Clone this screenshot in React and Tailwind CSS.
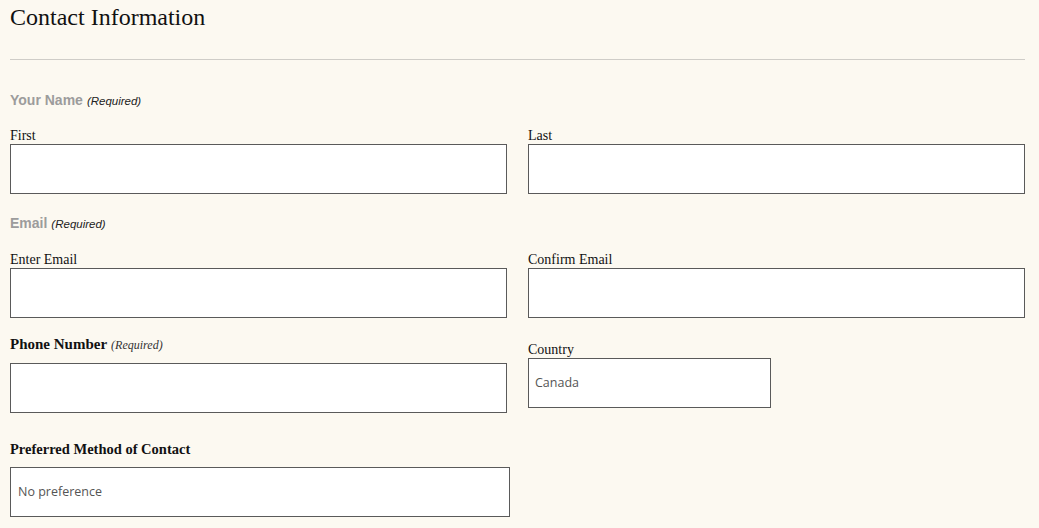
export default function App() {
  const serif = "font-['Liberation_Serif','EB_Garamond',serif]";
  const sans = "font-['Liberation_Sans',Arial,sans-serif]";
  const inputCls = "block w-full h-[50px] border border-[#5a5a5a] bg-white";
  const labelCls = "block h-[18px] text-[14px] leading-[20px]";

  return (
    <div className={`min-h-[528px] bg-[#fcf9f1] pl-[10px] pr-[14px] text-[#111] ${serif}`}>
      <h2 className="text-[24px] leading-[34px] font-normal">Contact Information</h2>
      <hr className="mt-[25px] border-0 border-t border-[#cfcdc8]" />

      <div className="mt-[30px] h-[20px] leading-[20px]">
        <span className={`text-[14px] font-bold text-[#9c9c9c] ${sans}`}>Your Name</span>{" "}
        <span className={`text-[11.5px] italic text-[#222] ${sans}`}>(Required)</span>
      </div>
      <div className="mt-[16px] grid grid-cols-2 gap-x-[21px]">
        <div>
          <label className={labelCls}>First</label>
          <div className={inputCls}></div>
        </div>
        <div>
          <label className={labelCls}>Last</label>
          <div className={inputCls}></div>
        </div>
      </div>

      <div className="mt-[19px] h-[20px] leading-[20px]">
        <span className={`text-[14px] font-bold text-[#9c9c9c] ${sans}`}>Email</span>{" "}
        <span className={`text-[11.5px] italic text-[#222] ${sans}`}>(Required)</span>
      </div>
      <div className="mt-[17px] grid grid-cols-2 gap-x-[21px]">
        <div>
          <label className={labelCls}>Enter Email</label>
          <div className={inputCls}></div>
        </div>
        <div>
          <label className={labelCls}>Confirm Email</label>
          <div className={inputCls}></div>
        </div>
      </div>

      <div className="mt-[16px] grid grid-cols-2 gap-x-[21px]">
        <div>
          <div className="h-[20px] leading-[20px]">
            <span className="text-[15px] font-bold">Phone Number</span>{" "}
            <span className="text-[12px] italic text-[#333]">(Required)</span>
          </div>
          <div className={`mt-[9px] ${inputCls}`}></div>
        </div>
        <div className="pt-[6px]">
          <label className={labelCls}>Country</label>
          <div className="flex h-[50px] w-[243px] items-center border border-[#5a5a5a] bg-white px-[6px]">
            <span className="font-['Open_Sans',sans-serif] text-[12.5px] text-[#555]">Canada</span>
          </div>
        </div>
      </div>

      <div className="mt-[26px] h-[20px] leading-[20px]">
        <span className="text-[14.5px] font-bold">Preferred Method of Contact</span>
      </div>
      <div className="mt-[8px] flex h-[50px] w-[500px] items-center border border-[#5a5a5a] bg-white px-[7px]">
        <span className="font-['Open_Sans',sans-serif] text-[12.5px] text-[#555]">No preference</span>
      </div>
    </div>
  );
}
